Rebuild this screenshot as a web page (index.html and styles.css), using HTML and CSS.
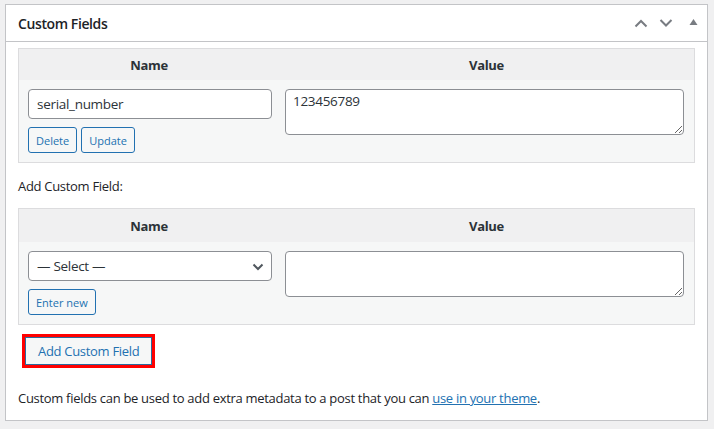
FILE: index.html
```html
<!DOCTYPE html>
<html lang="en">
<head>
<meta charset="utf-8">
<title>Custom Fields</title>
<link rel="stylesheet" href="styles.css">
</head>
<body>
<div class="postbox">
  <div class="postbox-header">
    <h2 class="title">Custom Fields</h2>
    <div class="handles">
      <svg class="h-icon" width="14" height="10" viewBox="0 0 14 10"><path d="M1.5 8.5 L7 3 L12.5 8.5" fill="none" stroke="#787c82" stroke-width="2"/></svg>
      <svg class="h-icon" width="14" height="10" viewBox="0 0 14 10"><path d="M1.5 2 L7 7.5 L12.5 2" fill="none" stroke="#787c82" stroke-width="2"/></svg>
      <svg class="h-tri" width="9" height="8" viewBox="0 0 9 8"><path d="M0.5 7 L4.5 1 L8.5 7 Z" fill="#787c82"/></svg>
    </div>
  </div>
  <div class="inside">
    <div class="meta-table">
      <div class="thead">
        <div>Name</div>
        <div>Value</div>
      </div>
      <div class="tbody">
        <div class="cell-name">
          <input class="field" type="text" value="serial_number">
          <div class="actions">
            <button class="btn-small">Delete</button>
            <button class="btn-small">Update</button>
          </div>
        </div>
        <div class="cell-value">
          <textarea class="area">123456789</textarea>
        </div>
      </div>
    </div>

    <p class="add-label">Add Custom Field:</p>

    <div class="meta-table">
      <div class="thead thead-add">
        <div>Name</div>
        <div>Value</div>
      </div>
      <div class="tbody">
        <div class="cell-name">
          <span class="select-wrap">
            <select class="field select"><option>— Select —</option></select>
            <svg class="select-arrow" width="12" height="8" viewBox="0 0 12 8"><path d="M1.5 1.5 L6 6 L10.5 1.5" fill="none" stroke="#50575e" stroke-width="2"/></svg>
          </span>
          <div class="actions">
            <button class="btn-small">Enter new</button>
          </div>
        </div>
        <div class="cell-value">
          <textarea class="area"></textarea>
        </div>
      </div>
    </div>

    <div class="highlight"><button class="btn">Add Custom Field</button></div>

    <p class="note">Custom fields can be used to add extra metadata to a post that you can <a href="#">use in your theme</a>.</p>
  </div>
</div>
</body>
</html>
```

FILE: styles.css
```css
* { box-sizing: border-box; }

body {
  margin: 0;
  padding: 4px 6px 0 5px;
  background: #f0f0f1;
  font-family: "Open Sans", "Noto Sans", sans-serif;
  font-size: 13px;
  letter-spacing: -0.3px;
  color: #1d2327;
}

.postbox {
  background: #fff;
  border: 1px solid #c3c4c7;
}

.postbox-header {
  height: 37px;
  border-bottom: 1px solid #c3c4c7;
  display: flex;
  align-items: center;
  justify-content: space-between;
  padding: 0 9px 0 12px;
}

.title {
  margin: 0;
  font-size: 14px;
  font-weight: 600;
  letter-spacing: -0.4px;
  color: #1d2327;
}

.handles {
  display: flex;
  align-items: center;
  gap: 11px;
}

.h-icon { display: block; }
.h-tri { display: block; margin-left: 5px; margin-top: -2px; }

.inside {
  padding: 6px 12px 12px;
}

.meta-table {
  border: 1px solid #dcdcde;
}

.thead {
  display: grid;
  grid-template-columns: 260px 1fr;
  height: 31px;
  align-items: center;
  background: #f0f0f1;
  font-weight: 700;
  text-align: center;
  color: #2c3338;
}

.thead-add {
  height: 33px;
}

.tbody {
  display: grid;
  grid-template-columns: 260px 1fr;
  background: #f6f7f7;
  padding: 9px 0;
}

.cell-name {
  padding: 0 7px 0 9px;
}

.cell-value {
  padding: 0 10px 0 6px;
}

.field {
  display: block;
  width: 244px;
  height: 30px;
  border: 1px solid #8c8f94;
  border-radius: 4px;
  background: #fff;
  padding: 0 8px;
  font-family: inherit;
  font-size: 13.5px;
  letter-spacing: -0.3px;
  color: #2c3338;
}

.select-wrap {
  position: relative;
  display: block;
  width: 244px;
}

.select {
  appearance: none;
  -webkit-appearance: none;
  padding-left: 8px;
}

.select-arrow {
  position: absolute;
  right: 8px;
  top: 12px;
}

.area {
  display: block;
  width: 100%;
  height: 46px;
  border: 1px solid #8c8f94;
  border-radius: 4px;
  background: #fff;
  padding: 2px 7px;
  font-family: inherit;
  font-size: 13.5px;
  letter-spacing: -0.3px;
  color: #2c3338;
  resize: vertical;
}

.actions {
  display: flex;
  gap: 4px;
  margin-top: 8px;
}

.btn-small {
  height: 26px;
  padding: 0 7px;
  border: 1px solid #2271b1;
  border-radius: 3px;
  background: #f6f7f7;
  color: #2271b1;
  font-family: inherit;
  font-size: 11px;
  letter-spacing: 0;
}

.add-label {
  margin: 13px 0 12px;
  line-height: 20px;
}

.highlight {
  display: inline-flex;
  margin: 9px 0 0 4px;
  border: 3px solid #ff0000;
}

.btn {
  height: 28px;
  padding: 0 12px;
  border: 1px solid #2c6a9c;
  background: #f6f7f7;
  color: #2271b1;
  font-family: inherit;
  font-size: 13px;
  letter-spacing: -0.3px;
}

.note {
  margin: 20px 0 0;
  line-height: 20px;
}

.note a {
  color: #2271b1;
}
```
